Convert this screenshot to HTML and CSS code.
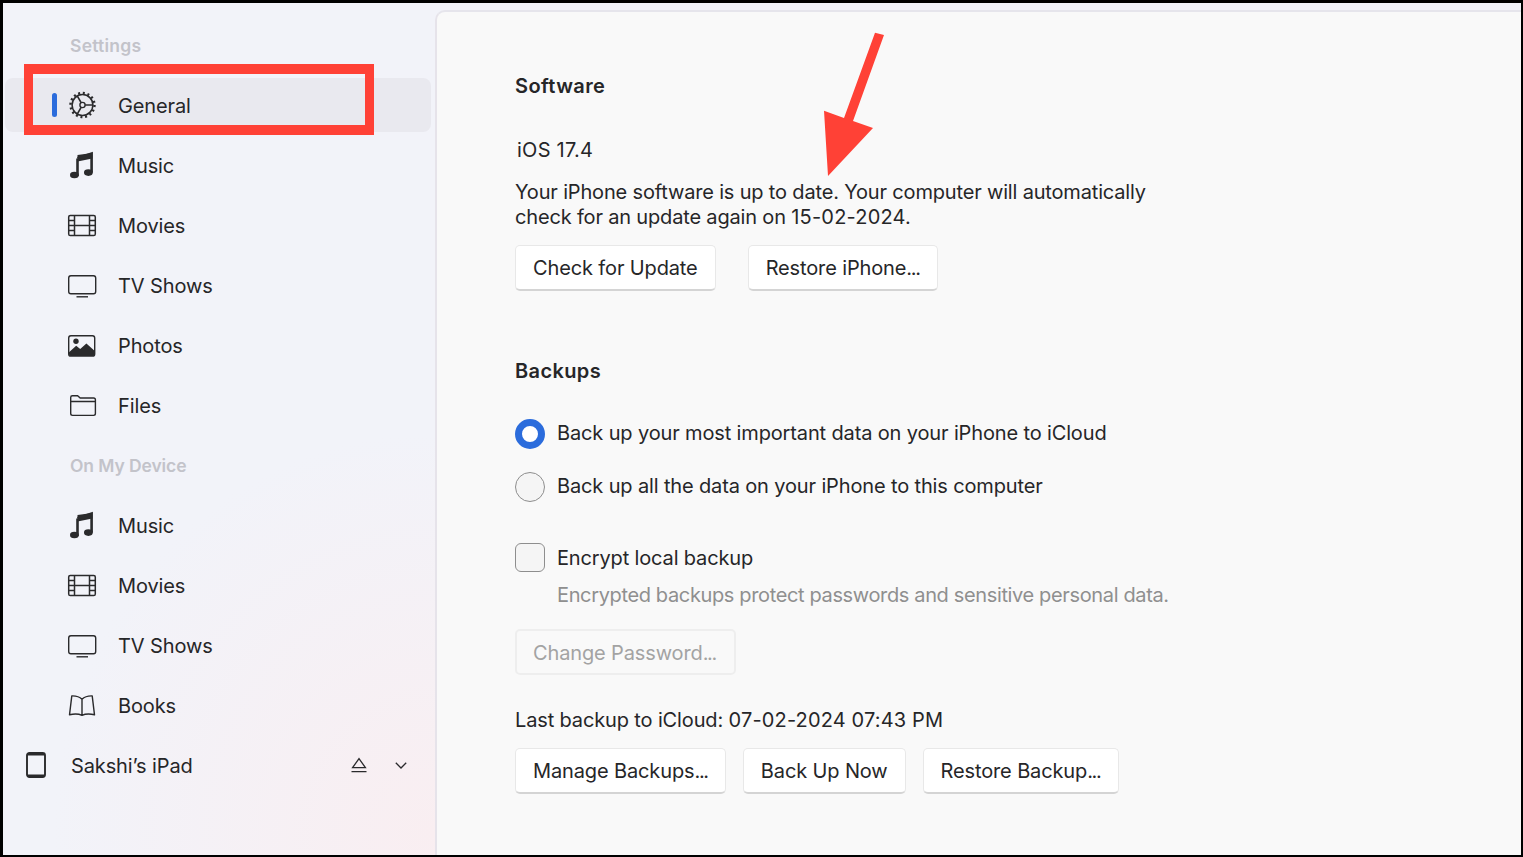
FILE: index.html
```html
<!DOCTYPE html>
<html lang="en">
<head>
<meta charset="utf-8">
<title>Settings</title>
<link rel="stylesheet" href="styles.css">
</head>
<body>
<svg class="defs" width="0" height="0" aria-hidden="true">
  <symbol id="i-gear" viewBox="0 0 30 30">
    <circle cx="15.5" cy="15" r="10.4" fill="none" stroke="currentColor" stroke-width="1.5"/>
    <circle cx="15.5" cy="15" r="12" fill="none" stroke="currentColor" stroke-width="2.4" stroke-dasharray="2 2.71"/>
    <circle cx="15.5" cy="15" r="2.6" fill="none" stroke="currentColor" stroke-width="1.4"/>
    <path d="M18.1 15H25.5M14.2 12.75 10.3 6M14.2 17.25 10.3 24" fill="none" stroke="currentColor" stroke-width="1.5"/>
  </symbol>
  <symbol id="i-music" viewBox="0 0 30 30">
    <path d="M10.5 8.2 24.6 3.6V22.4" fill="none" stroke="currentColor" stroke-width="2.6"/>
    <path d="M10.5 8.5V26" fill="none" stroke="currentColor" stroke-width="2.6"/>
    <path d="M10.5 4.9 25.4 3V8.6L10.5 11.5Z" fill="currentColor"/>
    <ellipse cx="7.4" cy="25" rx="4.4" ry="3.3" fill="currentColor"/>
    <ellipse cx="21.4" cy="22.6" rx="4.4" ry="3.3" fill="currentColor"/>
  </symbol>
  <symbol id="i-film" viewBox="0 0 30 30">
    <rect x="1.7" y="5.5" width="26.6" height="20" rx="1.6" fill="none" stroke="currentColor" stroke-width="1.5"/>
    <path d="M7.5 5.5V25.5M22.5 5.5V25.5M7.5 15.5H22.5M1.7 10.5H7.5M1.7 15.5H7.5M1.7 20.5H7.5M22.5 10.5H28.3M22.5 15.5H28.3M22.5 20.5H28.3" fill="none" stroke="currentColor" stroke-width="1.5"/>
  </symbol>
  <symbol id="i-tv" viewBox="0 0 30 30">
    <rect x="1.7" y="5.7" width="27" height="18" rx="2.2" fill="none" stroke="currentColor" stroke-width="1.4"/>
    <path d="M9.5 26.8H21" stroke="currentColor" stroke-width="1.4"/>
  </symbol>
  <symbol id="i-photo" viewBox="0 0 30 30">
    <rect x="1.7" y="5.7" width="26" height="20.4" rx="2.2" fill="none" stroke="currentColor" stroke-width="1.4"/>
    <path d="M2 24V22.2L9.2 15.8 13.2 19 19.4 13.6 27.5 20.8V24.5Q27.5 26 26 26H3.5Q2 26 2 24Z" fill="currentColor"/>
    <circle cx="9" cy="11.2" r="2.7" fill="currentColor"/>
  </symbol>
  <symbol id="i-folder" viewBox="0 0 30 30">
    <path d="M3.7 11.5V7.4Q3.7 5.7 5.4 5.7H10.6L13.2 8H26.6Q28.4 8 28.4 9.8V23.6Q28.4 25.4 26.6 25.4H5.5Q3.7 25.4 3.7 23.6ZM3.7 11.5H28.4" fill="none" stroke="currentColor" stroke-width="1.4"/>
  </symbol>
  <symbol id="i-book" viewBox="0 0 30 30">
    <path d="M15 9.2Q11.5 5.7 4.8 5.9 L2.5 24.8Q10 23 15 25.4 20 23 27.5 24.8L25.2 5.9Q18.5 5.7 15 9.2ZM15 9.2V25.4" fill="none" stroke="currentColor" stroke-width="1.4" stroke-linejoin="round"/>
  </symbol>
</svg>

<div class="frame">
  <aside class="sidebar">
    <div class="section-label settings">Settings</div>
    <a class="nav-item active"><span class="marker"></span><svg class="nav-icon"><use href="#i-gear"/></svg><span class="nav-text">General</span></a>
    <a class="nav-item"><svg class="nav-icon"><use href="#i-music"/></svg><span class="nav-text">Music</span></a>
    <a class="nav-item"><svg class="nav-icon"><use href="#i-film"/></svg><span class="nav-text">Movies</span></a>
    <a class="nav-item"><svg class="nav-icon"><use href="#i-tv"/></svg><span class="nav-text">TV Shows</span></a>
    <a class="nav-item"><svg class="nav-icon"><use href="#i-photo"/></svg><span class="nav-text">Photos</span></a>
    <a class="nav-item"><svg class="nav-icon"><use href="#i-folder"/></svg><span class="nav-text">Files</span></a>
    <div class="section-label device">On My Device</div>
    <a class="nav-item"><svg class="nav-icon"><use href="#i-music"/></svg><span class="nav-text">Music</span></a>
    <a class="nav-item"><svg class="nav-icon"><use href="#i-film"/></svg><span class="nav-text">Movies</span></a>
    <a class="nav-item"><svg class="nav-icon"><use href="#i-tv"/></svg><span class="nav-text">TV Shows</span></a>
    <a class="nav-item"><svg class="nav-icon"><use href="#i-book"/></svg><span class="nav-text">Books</span></a>
    <div class="device-row">
      <svg class="device-icon" viewBox="0 0 20 26">
        <rect x="1" y="1" width="18" height="24" rx="2.4" fill="none" stroke="currentColor" stroke-width="1.9"/>
        <rect x="1" y="1" width="18" height="2.6" rx="1" fill="currentColor"/>
        <rect x="1" y="22.4" width="18" height="2.6" rx="1" fill="currentColor"/>
      </svg>
      <span class="device-name nav-text">Sakshi’s iPad</span>
      <svg class="eject" viewBox="0 0 16 16"><path d="M8 1.6 14.4 10.6H1.6Z M0.5 14.6H15.5" fill="none" stroke="currentColor" stroke-width="1.3"/></svg>
      <svg class="chevron" viewBox="0 0 12 7"><path d="M0.8 0.8 6 6 11.2 0.8" fill="none" stroke="currentColor" stroke-width="1.3"/></svg>
    </div>
  </aside>

  <main class="content">
    <h2 class="heading">Software</h2>
    <p class="version">iOS 17.4</p>
    <p class="status">Your iPhone software is up to date. Your computer will automatically<br>check for an update again on <span class="digits">15-02-2024.</span></p>
    <div class="btn-row wide">
      <button class="btn">Check for Update</button>
      <button class="btn">Restore iPhone<span class="dots">...</span></button>
    </div>

    <h2 class="heading backups">Backups</h2>
    <label class="option first"><span class="radio on"></span><span class="option-text">Back up your most important data on your iPhone to iCloud</span></label>
    <label class="option second"><span class="radio"></span><span class="option-text">Back up all the data on your iPhone to this computer</span></label>
    <label class="option encrypt"><span class="check"></span><span class="option-text">Encrypt local backup</span></label>
    <p class="hint">Encrypted backups protect passwords and sensitive personal data.</p>
    <button class="btn disabled">Change Password<span class="dots">...</span></button>
    <p class="last">Last backup to iCloud: <span class="digits">07-02-2024 07:43 PM</span></p>
    <div class="btn-row">
      <button class="btn">Manage Backups<span class="dots">...</span></button>
      <button class="btn">Back Up Now</button>
      <button class="btn">Restore Backup<span class="dots">...</span></button>
    </div>
  </main>

  <div class="callout-box"></div>
  <svg class="callout-arrow" viewBox="0 0 1523 857" aria-hidden="true">
    <path d="M875 32.7 884 35 853 121 873 128 828 176 824 110.7 844 118Z"/>
  </svg>
</div>
</body>
</html>
```

FILE: styles.css
```css
* { box-sizing: border-box; }

html, body { margin: 0; padding: 0; }

body {
  width: 1523px;
  height: 857px;
  overflow: hidden;
  font-family: Inter, "Noto Sans", sans-serif;
  font-size: 20px;
  line-height: 25px;
  color: #262628;
}

.defs { position: absolute; }

.frame {
  position: relative;
  display: flex;
  width: 1523px;
  height: 857px;
  border-style: solid;
  border-color: #000;
  border-width: 3px 2px 2px 3px;
  background:
    radial-gradient(ellipse 380px 400px at 430px 830px, #f9eef1 0%, rgba(249, 238, 241, 0) 100%),
    #f2f3f9;
}

.sidebar {
  flex: 0 0 432px;
  display: flex;
  flex-direction: column;
  gap: 6px;
  padding: 15px 4px 0 2px;
}

.section-label {
  height: 54px;
  display: flex;
  align-items: center;
  padding-left: 65px;
  font-size: 17.5px;
  font-weight: 600;
  color: #c3c3ca;
}

.section-label.settings { letter-spacing: 0.25px; }
.section-label.device { letter-spacing: -0.1px; }

.nav-item {
  position: relative;
  height: 54px;
  flex: none;
  display: flex;
  align-items: center;
  gap: 21px;
  padding-left: 62px;
  border-radius: 8px;
}

.nav-item.active { background: #e9e9ef; }

.nav-text { padding-top: 2px; letter-spacing: -0.12px; }

.marker {
  position: absolute;
  left: 47px;
  top: 15px;
  width: 5px;
  height: 24px;
  border-radius: 3px;
  background: #2b6cdc;
}

.nav-icon { width: 30px; height: 30px; flex: none; color: #2a2a2c; }

.device-row {
  height: 54px;
  flex: none;
  display: flex;
  align-items: center;
  padding-left: 21px;
}

.device-icon { width: 20px; height: 26px; flex: none; color: #2a2a2c; }
.device-name { margin-left: 25px; flex: 1; }
.eject { width: 16px; height: 16px; flex: none; margin-right: 28px; color: #2a2a2c; }
.chevron { width: 12px; height: 7px; flex: none; margin-right: 24px; color: #2a2a2c; }

.content {
  flex: 1;
  margin-top: 7px;
  padding: 62px 0 0 78px;
  background: #f9f9f9;
  border-top: 2px solid #e6e5ec;
  border-left: 2px solid #e6e3ea;
  border-top-left-radius: 10px;
}

.heading { margin: 0; font-size: 20px; line-height: 25px; font-weight: 600; letter-spacing: 0.38px; }
.heading.backups { margin-top: 68px; }

.version { margin: 39px 0 0 2px; letter-spacing: 0.25px; }
.status { margin: 17px 0 0; letter-spacing: -0.17px; }
.digits { letter-spacing: 0.2px; }
.last { margin: 33px 0 0; letter-spacing: -0.14px; }
.last .digits { letter-spacing: 0.16px; }

.btn-row { display: flex; gap: 17px; margin-top: 15px; }
.btn-row.wide { gap: 32px; }

.btn {
  height: 46px;
  padding: 2px 17px 0;
  font: inherit;
  color: inherit;
  letter-spacing: -0.13px;
  white-space: nowrap;
  background: #fff;
  border: 1px solid #e8e8e8;
  border-bottom: 2px solid #d4d4d4;
  border-radius: 5px;
}

.dots { letter-spacing: -1.3px; }

.btn.disabled {
  display: block;
  margin: 21px 0 0;
  width: 221px;
  color: #a3a3a3;
  background: #f9f9f9;
  border: 2px solid #eeeeee;
  text-align: left;
  padding-left: 16px;
}

.option { display: flex; align-items: center; gap: 12px; }
.option-text { margin-top: -2px; letter-spacing: -0.14px; }
.option.first { height: 30px; margin-top: 35px; }
.option.second { height: 30px; margin-top: 23px; }
.option.encrypt { height: 29px; margin-top: 41px; }
.option.encrypt .option-text { margin-top: 1px; letter-spacing: -0.15px; }

.radio {
  width: 30px;
  height: 30px;
  flex: none;
  border-radius: 50%;
  border: 1.5px solid #8e8e8e;
  background: #f5f5f5;
}

.radio.on { border: 7.5px solid #2b6cdc; background: #fff; }

.check {
  width: 30px;
  height: 29px;
  flex: none;
  border-radius: 6px;
  border: 1.5px solid #8e8e8e;
  background: #f5f5f5;
}

.hint { margin: 11px 0 0 42px; color: #8f8f8f; letter-spacing: -0.36px; }

.callout-box {
  position: absolute;
  left: 21px;
  top: 61px;
  width: 350px;
  height: 71px;
  border: solid #ff4136;
  border-width: 10px 9px;
}

.callout-arrow {
  position: absolute;
  left: -3px;
  top: -3px;
  width: 1523px;
  height: 857px;
  fill: #ff4136;
  pointer-events: none;
}
```
